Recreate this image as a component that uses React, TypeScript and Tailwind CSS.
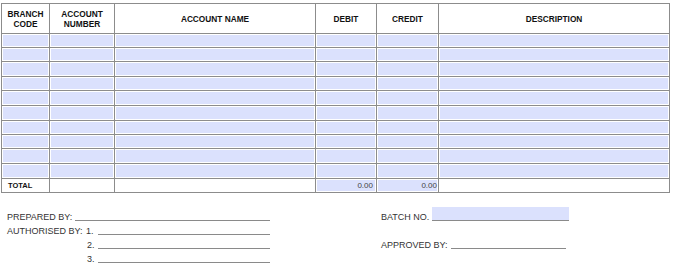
import React from 'react';

const cols = [48, 65, 201, 61, 62, 231];
const rowHeights = [14, 14, 15, 14, 15, 15, 14, 14, 15, 15];

const font = { fontFamily: '"Liberation Sans", Arial, sans-serif' };

const Fill: React.FC<{ children?: React.ReactNode; className?: string }> = ({ children, className = '' }) => (
  <td className={`border border-[#8c8c8c] bg-[#dbe1fd] p-0 shadow-[inset_0_0_0_1px_#fff] ${className}`}>{children}</td>
);

// underline that sits on the text baseline
const Line: React.FC<{ className?: string }> = ({ className = '' }) => (
  <div className={`mb-[2px] h-[1px] bg-[#8a8a8a] ${className}`} />
);

const SignRow: React.FC<{ children?: React.ReactNode }> = ({ children }) => (
  <div className="flex h-[14px] items-end">{children}</div>
);

const App: React.FC = () => {
  return (
    <div className="h-[274px] w-[680px] bg-white pl-[1px] pt-[3px] text-[#333]" style={font}>
      <table className="table-fixed border-collapse">
        <colgroup>
          {cols.map((w, i) => (
            <col key={i} style={{ width: w }} />
          ))}
        </colgroup>
        <thead>
          <tr className="h-[30px] text-[8.3px] leading-[10px] text-[#111]">
            <th className="border border-[#8c8c8c] text-center font-bold">BRANCH<br />CODE</th>
            <th className="border border-[#8c8c8c] text-center font-bold">ACCOUNT<br />NUMBER</th>
            <th className="border border-[#8c8c8c] text-center font-bold">ACCOUNT NAME</th>
            <th className="border border-[#8c8c8c] text-center font-bold">DEBIT</th>
            <th className="border border-[#8c8c8c] text-center font-bold">CREDIT</th>
            <th className="border border-[#8c8c8c] text-center font-bold">DESCRIPTION</th>
          </tr>
        </thead>
        <tbody>
          {rowHeights.map((h, r) => (
            <tr key={r} style={{ height: h }}>
              {cols.map((_, c) => (
                <Fill key={c} />
              ))}
            </tr>
          ))}
          <tr className="h-[14px] text-[8px] leading-[10px]">
            <td className="border border-[#8c8c8c] pl-[6px] text-[7.5px] font-bold text-[#111]">TOTAL</td>
            <td className="border border-[#8c8c8c]" />
            <td className="border border-[#8c8c8c]" />
            <Fill className="pr-[3px] text-right text-[#444]">0.00</Fill>
            <Fill className="pr-[1px] text-right text-[#444]">0.00</Fill>
            <td className="border border-[#8c8c8c]" />
          </tr>
        </tbody>
      </table>

      <div className="mt-[16px] flex text-[9px] leading-[11px]">
        <div className="ml-[6px] w-[263px]">
          <SignRow>
            <span>PREPARED BY:</span>
            <Line className="ml-[3px] flex-1" />
          </SignRow>
          <SignRow>
            <span className="w-[79px]">AUTHORISED BY:</span>
            <span className="w-[12px]">1.</span>
            <Line className="flex-1" />
          </SignRow>
          <SignRow>
            <span className="w-[80px]" />
            <span className="w-[11px]">2.</span>
            <Line className="flex-1" />
          </SignRow>
          <SignRow>
            <span className="w-[80px]" />
            <span className="w-[11px]">3.</span>
            <Line className="flex-1" />
          </SignRow>
        </div>

        <div className="ml-[111px] w-[190px]">
          <SignRow>
            <span>BATCH NO.</span>
            <div className="mb-[2px] ml-[3px] h-[14px] w-[137px] shrink-0 border-b border-[#8a8a8a] bg-[#dbe1fd]" />
          </SignRow>
          <SignRow />
          <SignRow>
            <span>APPROVED BY:</span>
            <Line className="ml-[3px] w-[115px]" />
          </SignRow>
        </div>
      </div>
    </div>
  );
};

export default App;
